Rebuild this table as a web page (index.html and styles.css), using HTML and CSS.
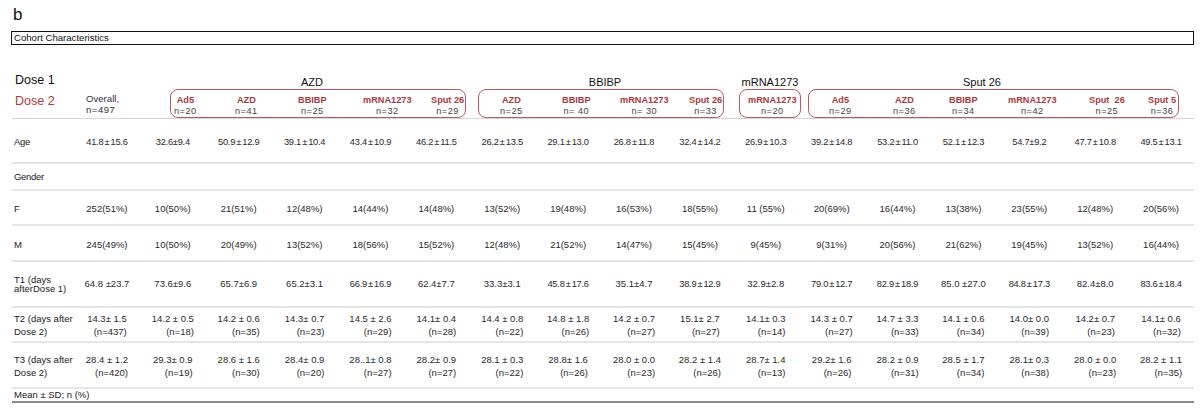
FILE: index.html
```html
<!DOCTYPE html>
<html>
<head>
<meta charset="utf-8">
<link rel="stylesheet" href="styles.css">
</head>
<body>
<div class="fig">
  <div class="panel">b</div>
  <div class="caption">Cohort Characteristics</div>

  <div class="head">
    <div class="dose"><div class="d1">Dose 1</div><div class="d2">Dose 2</div></div>
    <div class="overall"><div>Overall,</div><div class="n">n=497</div></div>

    <div class="grp g-azd">
      <div class="gname">AZD</div>
      <div class="box">
        <div class="it"><span class="lab">Ad5</span><span class="n">n=20</span></div>
        <div class="it"><span class="lab">AZD</span><span class="n">n=41</span></div>
        <div class="it"><span class="lab">BBIBP</span><span class="n">n=25</span></div>
        <div class="it"><span class="lab">mRNA1273</span><span class="n">n=32</span></div>
        <div class="it"><span class="lab">Sput 26</span><span class="n">n=29</span></div>
      </div>
    </div>

    <div class="grp g-bb">
      <div class="gname">BBIBP</div>
      <div class="box">
        <div class="it"><span class="lab">AZD</span><span class="n">n=25</span></div>
        <div class="it"><span class="lab">BBIBP</span><span class="n">n= 40</span></div>
        <div class="it"><span class="lab">mRNA1273</span><span class="n">n= 30</span></div>
        <div class="it"><span class="lab">Sput 26</span><span class="n">n=33</span></div>
      </div>
    </div>

    <div class="grp g-mr">
      <div class="gname">mRNA1273</div>
      <div class="box">
        <div class="it"><span class="lab">mRNA1273</span><span class="n">n=20</span></div>
      </div>
    </div>

    <div class="grp g-sp">
      <div class="gname">Sput 26</div>
      <div class="box">
        <div class="it"><span class="lab">Ad5</span><span class="n">n=29</span></div>
        <div class="it"><span class="lab">AZD</span><span class="n">n=36</span></div>
        <div class="it"><span class="lab">BBIBP</span><span class="n">n=34</span></div>
        <div class="it"><span class="lab">mRNA1273</span><span class="n">n=42</span></div>
        <div class="it"><span class="lab">Sput  26</span><span class="n">n=25</span></div>
        <div class="it"><span class="lab">Sput 5</span><span class="n">n=36</span></div>
      </div>
    </div>
  </div>

  <div class="tbl">
    <div class="row r-age">
      <div class="lbl sq">Age</div>
      <div class="c nar">41.8 ± 15.6</div><div class="c nar">32.6±9.4</div><div class="c nar">50.9 ± 12.9</div><div class="c nar">39.1 ± 10.4</div><div class="c nar">43.4 ± 10.9</div><div class="c nar">46.2 ± 11.5</div><div class="c nar">26.2 ± 13.5</div><div class="c nar">29.1 ± 13.0</div><div class="c nar">26.8 ± 11.8</div><div class="c nar">32.4 ± 14.2</div><div class="c nar">26.9 ± 10.3</div><div class="c nar">39.2 ± 14.8</div><div class="c nar">53.2 ± 11.0</div><div class="c nar">52.1 ± 12.3</div><div class="c nar">54.7±9.2</div><div class="c nar">47.7 ± 10.8</div><div class="c nar">49.5 ± 13.1</div>
    </div>
    <div class="row r-gen">
      <div class="lbl sq">Gender</div>
    </div>
    <div class="row r-f">
      <div class="lbl">F</div>
      <div class="c">252(51%)</div><div class="c">10(50%)</div><div class="c">21(51%)</div><div class="c">12(48%)</div><div class="c">14(44%)</div><div class="c">14(48%)</div><div class="c">13(52%)</div><div class="c">19(48%)</div><div class="c">16(53%)</div><div class="c">18(55%)</div><div class="c">11 (55%)</div><div class="c">20(69%)</div><div class="c">16(44%)</div><div class="c">13(38%)</div><div class="c">23(55%)</div><div class="c">12(48%)</div><div class="c">20(56%)</div>
    </div>
    <div class="row r-m">
      <div class="lbl">M</div>
      <div class="c">245(49%)</div><div class="c">10(50%)</div><div class="c">20(49%)</div><div class="c">13(52%)</div><div class="c">18(56%)</div><div class="c">15(52%)</div><div class="c">12(48%)</div><div class="c">21(52%)</div><div class="c">14(47%)</div><div class="c">15(45%)</div><div class="c">9(45%)</div><div class="c">9(31%)</div><div class="c">20(56%)</div><div class="c">21(62%)</div><div class="c">19(45%)</div><div class="c">13(52%)</div><div class="c">16(44%)</div>
    </div>
    <div class="row r-t1">
      <div class="lbl tight">T1 (days<br>afterDose 1)</div>
      <div class="c">64.8 ±23.7</div><div class="c">73.6±9.6</div><div class="c">65.7±6.9</div><div class="c">65.2±3.1</div><div class="c nar">66.9 ± 16.9</div><div class="c">62.4±7.7</div><div class="c">33.3±3.1</div><div class="c nar">45.8 ± 17.6</div><div class="c">35.1±4.7</div><div class="c nar">38.9 ± 12.9</div><div class="c">32.9±2.8</div><div class="c nar">79.0 ± 12.7</div><div class="c nar">82.9 ± 18.9</div><div class="c">85.0 ±27.0</div><div class="c nar">84.8 ± 17.3</div><div class="c">82.4±8.0</div><div class="c nar">83.6 ± 18.4</div>
    </div>
    <div class="row r-t2">
      <div class="lbl two">T2 (days after<br>Dose 2)</div>
      <div class="c"><span class="tv"><span>14.3± 1.5</span><span>(n=437)</span></span></div>
      <div class="c"><span class="tv"><span>14.2 ± 0.5</span><span>(n=18)</span></span></div>
      <div class="c"><span class="tv"><span>14.2 ± 0.6</span><span>(n=35)</span></span></div>
      <div class="c"><span class="tv"><span>14.3± 0.7</span><span>(n=23)</span></span></div>
      <div class="c"><span class="tv"><span>14.5 ± 2.6</span><span>(n=29)</span></span></div>
      <div class="c"><span class="tv"><span>14.1± 0.4</span><span>(n=28)</span></span></div>
      <div class="c"><span class="tv"><span>14.4 ± 0.8</span><span>(n=22)</span></span></div>
      <div class="c"><span class="tv"><span>14.8 ± 1.8</span><span>(n=26)</span></span></div>
      <div class="c"><span class="tv"><span>14.2 ± 0.7</span><span>(n=27)</span></span></div>
      <div class="c"><span class="tv"><span>15.1± 2.7</span><span>(n=27)</span></span></div>
      <div class="c"><span class="tv"><span>14.1± 0.3</span><span>(n=14)</span></span></div>
      <div class="c"><span class="tv"><span>14.3 ± 0.7</span><span>(n=27)</span></span></div>
      <div class="c"><span class="tv"><span>14.7 ± 3.3</span><span>(n=33)</span></span></div>
      <div class="c"><span class="tv"><span>14.1 ± 0.6</span><span>(n=34)</span></span></div>
      <div class="c"><span class="tv"><span>14.0± 0.0</span><span>(n=39)</span></span></div>
      <div class="c"><span class="tv"><span>14.2± 0.7</span><span>(n=23)</span></span></div>
      <div class="c"><span class="tv"><span>14.1± 0.6</span><span>(n=32)</span></span></div>
    </div>
    <div class="row r-t3">
      <div class="lbl two">T3 (days after<br>Dose 2)</div>
      <div class="c"><span class="tv"><span>28.4 ± 1.2</span><span>(n=420)</span></span></div>
      <div class="c"><span class="tv"><span>29.3± 0.9</span><span>(n=19)</span></span></div>
      <div class="c"><span class="tv"><span>28.6 ± 1.6</span><span>(n=30)</span></span></div>
      <div class="c"><span class="tv"><span>28.4± 0.9</span><span>(n=20)</span></span></div>
      <div class="c"><span class="tv"><span>28..1± 0.8</span><span>(n=27)</span></span></div>
      <div class="c"><span class="tv"><span>28.2± 0.9</span><span>(n=27)</span></span></div>
      <div class="c"><span class="tv"><span>28.1 ± 0.3</span><span>(n=22)</span></span></div>
      <div class="c"><span class="tv"><span>28.8± 1.6</span><span>(n=26)</span></span></div>
      <div class="c"><span class="tv"><span>28.0 ± 0.0</span><span>(n=23)</span></span></div>
      <div class="c"><span class="tv"><span>28.2 ± 1.4</span><span>(n=26)</span></span></div>
      <div class="c"><span class="tv"><span>28.7± 1.4</span><span>(n=13)</span></span></div>
      <div class="c"><span class="tv"><span>29.2± 1.6</span><span>(n=26)</span></span></div>
      <div class="c"><span class="tv"><span>28.2 ± 0.9</span><span>(n=31)</span></span></div>
      <div class="c"><span class="tv"><span>28.5 ± 1.7</span><span>(n=34)</span></span></div>
      <div class="c"><span class="tv"><span>28.1± 0.3</span><span>(n=38)</span></span></div>
      <div class="c"><span class="tv"><span>28.0 ± 0.0</span><span>(n=23)</span></span></div>
      <div class="c"><span class="tv"><span>28.2 ± 1.1</span><span>(n=35)</span></span></div>
    </div>
    <div class="row r-mean">
      <div class="lbl full">Mean ± SD; n (%)</div>
    </div>
  </div>
</div>
</body>
</html>
```

FILE: styles.css
```css
body {
  margin: 0;
  background: #fff;
  font-family: "Liberation Sans", Arial, sans-serif;
  color: #222;
}

.fig {
  width: 1182px;
  padding: 0 6px 0 12px;
}

.panel {
  font-size: 17px;
  line-height: 20px;
  padding-top: 5px;
  margin-left: 1px;
  color: #111;
}

.caption {
  margin: 6px 0 0 -1px;
  width: 1183px;
  height: 14px;
  box-sizing: border-box;
  border: 1px solid #111;
  font-size: 9.6px;
  line-height: 12px;
  padding-left: 2px;
  color: #111;
}

/* ---------- header ---------- */
.head {
  display: flex;
  height: 74px;
  box-sizing: border-box;
  border-bottom: 1px solid #d6d6d6;
}

.dose {
  width: 74px;
  flex: none;
  padding-top: 27px;
  padding-left: 3px;
  box-sizing: border-box;
  font-size: 12.5px;
  line-height: 16px;
  color: #111;
}

.d2 {
  margin-top: 5px;
  color: #b13b3b;
}

.overall {
  width: 84px;
  flex: none;
  padding-top: 48px;
  font-size: 9.6px;
  line-height: 11px;
  color: #333;
}

.n {
  letter-spacing: 0.5px;
  white-space: pre;
}

.grp {
  flex: none;
  padding-top: 30px;
  display: flex;
  flex-direction: column;
}

.gname {
  font-size: 11px;
  line-height: 14px;
  text-align: center;
  color: #111;
}

.box {
  height: 29px;
  box-sizing: border-box;
  border: 1px solid #bb5a60;
  border-radius: 8px;
  display: grid;
  padding-top: 4px;
}

.it {
  display: flex;
  flex-direction: column;
  align-items: center;
  justify-self: start;
}

.lab {
  font-size: 9.2px;
  font-weight: bold;
  line-height: 12px;
  color: #a83a3e;
  white-space: pre;
}

.it .n {
  font-size: 9.2px;
  line-height: 11px;
  color: #444;
}

.g-azd { width: 296px; }
.g-azd .gname { padding-right: 12px; }
.g-azd .box {
  padding-left: 3px;
  grid-template-columns: 61px 63px 65px 68px auto;
}

.g-bb { width: 246px; margin-left: 12px; }
.g-bb .gname { padding-left: 8px; }
.g-bb .box {
  padding-left: 21px;
  grid-template-columns: 62px 58px 69px auto;
}

.g-mr { width: 62px; margin-left: 15px; }
.g-mr .box {
  padding-left: 8px;
  grid-template-columns: auto;
}

.g-sp { width: 371px; margin-left: 7px; }
.g-sp .gname { padding-right: 23px; }
.g-sp .box {
  padding-left: 20px;
  grid-template-columns: 64px 56px 59px 81px 59px auto;
}

/* ---------- body ---------- */
.row {
  display: grid;
  grid-template-columns: 62px repeat(17, 1fr);
  align-items: center;
  box-sizing: border-box;
  border-bottom: 2px solid #e6e6e6;
}

.r-age { height: 45px; padding-top: 3px; }
.r-gen { height: 27px; }
.r-f { height: 35px; padding-top: 2px; }
.r-m { height: 36px; padding-top: 3px; }
.r-t1 { height: 46px; }
.r-t2 { height: 35px; }
.r-t3 { height: 46px; padding-top: 2px; }
.r-mean {
  height: 14px;
  border-bottom: 2px solid #8c8c8c;
}

.lbl {
  font-size: 9.5px;
  line-height: 12px;
  padding-left: 2px;
  color: #222;
  white-space: nowrap;
}

.sq { letter-spacing: -0.3px; }
.tight { line-height: 9.5px; }
.two { line-height: 13px; }
.full { grid-column: 1 / -1; }

.c {
  text-align: center;
  font-size: 9.5px;
  line-height: 12px;
  color: #2a2a2a;
  white-space: nowrap;
}

.nar {
  font-size: 9.3px;
  letter-spacing: -0.25px;
  word-spacing: -1.2px;
}

.tv {
  display: inline-flex;
  flex-direction: column;
  align-items: flex-end;
  line-height: 13px;
}
```
